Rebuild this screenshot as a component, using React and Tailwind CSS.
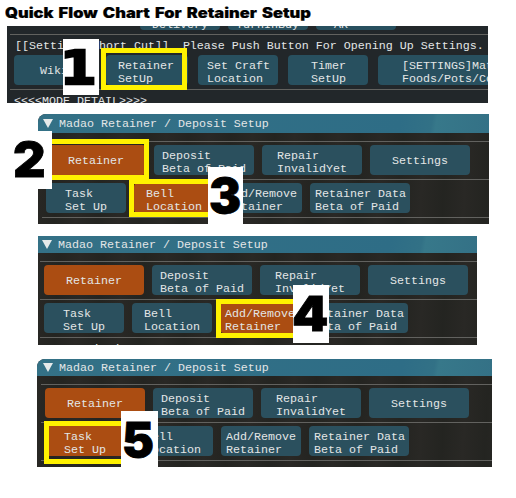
const MONO =
  "font-['Liberation_Mono',monospace] text-[11.66px] leading-[13px] text-[#e3e6e6] whitespace-pre";

function Rule() {
  return <div className="h-px shrink-0 bg-[#62625f]" />;
}

function Btn({ label, active, wide, pad, row }) {
  const tone = active
    ? "bg-[#ab4d12]"
    : row === "flat"
      ? "bg-[#28505f]"
      : "bg-[#2b505e]";
  const drop = label.includes("\n") ? "pt-[6px]" : "pt-[2px]";
  return (
    <button
      type="button"
      className={`${tone} ${wide} ${pad} ${drop} flex h-[30px] shrink-0 items-center rounded-[4px] text-left whitespace-pre`}
    >
      {label}
    </button>
  );
}

function ShortcutPanel() {
  const previous = [
    { label: "Delivery", pad: "pl-[12px]" },
    { label: "TurnInBuy", pad: "pl-[8px]" },
    { label: "AR", pad: "pl-[18px]" },
  ];
  return (
    <section
      className={`${MONO} ml-[7px] flex h-[77px] w-[481px] flex-col overflow-hidden bg-[#22272a]`}
    >
      <div className="ml-[133px] flex h-[4px] shrink-0 items-end gap-2">
        {previous.map((t) => (
          <div
            key={t.label}
            className={`${t.pad} flex h-[30px] w-20 shrink-0 items-end rounded-[4px] bg-[#28505f] leading-[9px]`}
          >
            {t.label}
          </div>
        ))}
      </div>
      <div className="mt-[4px] ml-[3px]">
        <Rule />
      </div>
      <p className="mt-[4px] ml-[8px] h-[16px] shrink-0 pt-px">
        {"[[Settings Short Cut]]  Please Push Button For Opening Up Settings."}
      </p>
      <div className="ml-[7px] flex shrink-0 gap-[10px]">
        <Btn row="flat" label="Wiki" wide="w-[82px]" pad="pl-[26px]" />
        <Btn row="flat" label={"Retainer\nSetUp"} wide="w-[82px]" pad="pl-[12px]" />
        <Btn row="flat" label={"Set Craft\nLocation"} wide="w-20" pad="pl-[9px]" />
        <Btn row="flat" label={"Timer\nSetUp"} wide="w-20" pad="pl-[23px]" />
        <Btn row="flat" label={"[SETTINGS]Materia\nFoods/Pots/Confirm"} wide="w-[180px]" pad="pl-[24px]" />
      </div>
      <div className="mt-[4px] ml-[3px]">
        <Rule />
      </div>
      <p className="mt-[5px] ml-[7px] shrink-0">{"<<<<MODE DETAIL>>>>"}</p>
    </section>
  );
}

function RetainerPanel({ box, head, left, ruleLeft, activeSub, footer }) {
  const subs = [
    { label: "Task\nSet Up", wide: "w-20", pad: "pl-[19px]" },
    { label: "Bell\nLocation", wide: "w-20", pad: "pl-[12px]" },
    { label: "Add/Remove\nRetainer", wide: "w-20", pad: "pl-[5px]" },
    { label: "Retainer Data\nBeta of Paid", wide: "w-[100px]", pad: "pl-[5px]" },
  ];
  return (
    <section
      className={`${MONO} ${box} flex flex-col overflow-hidden bg-[#292825] bg-[repeating-linear-gradient(93deg,transparent_0px,rgba(20,25,20,0.25)_22px,transparent_43px)]`}
    >
      <header
        className={`${head} flex shrink-0 items-center bg-[linear-gradient(100deg,#347186_0%,#2e6d86_80%,#327186_87%,#37788a_88%,#347186_100%)]`}
      >
        <svg viewBox="0 0 10 9" className="mr-[6px] mb-[2px] h-[9px] w-[10px]">
          <path d="M0 0h10L5 9z" fill="#e6eaea" />
        </svg>
        <span>Madao Retainer / Deposit Setup</span>
      </header>
      <div className={`mt-[8px] ${ruleLeft}`}>
        <Rule />
      </div>
      <div className={`${left} mt-[3px] flex shrink-0 gap-2`}>
        <Btn active label="Retainer" wide="w-[100px]" pad="pl-[22px]" />
        <Btn label={"Deposit\nBeta of Paid"} wide="w-[100px]" pad="pl-[8px]" />
        <Btn label={"Repair\nInvalidYet"} wide="w-[100px]" pad="pl-[15px]" />
        <Btn label="Settings" wide="w-[100px]" pad="pl-[22px]" />
      </div>
      <div className={`${ruleLeft} mt-[4px]`}>
        <Rule />
      </div>
      <div className={`${left} mt-[3px] flex shrink-0 gap-2`}>
        {subs.map((s, i) => (
          <Btn key={s.label} active={i === activeSub} {...s} />
        ))}
      </div>
      <div className={`${ruleLeft} mt-[4px]`}>
        <Rule />
      </div>
      <p className={`${footer} ${left} shrink-0`}>▼ Description</p>
    </section>
  );
}

function Frame({ at }) {
  return <div className={`${at} absolute border-[5px] border-[#fff200]`} />;
}

function Step({ n, at, glyph, face = "font-['Inter',sans-serif] [stroke-width:0.8px]" }) {
  return (
    <div className={`${at} absolute bg-white`}>
      <svg className="block h-full w-full overflow-visible">
        <text
          transform={glyph}
          className={`${face} fill-black stroke-black text-[48px] font-black`}
        >
          {n}
        </text>
      </svg>
    </div>
  );
}

export default function App() {
  return (
    <main className="relative h-[498px] w-[516px] overflow-hidden bg-white">
      <h1 className="h-[26px] pt-[3px] pl-[5px]">
        <svg className="block h-[20px] w-[320px]">
          <text
            x="0"
            y="14.5"
            textLength="306"
            lengthAdjust="spacingAndGlyphs"
            className="fill-black stroke-black font-['Inter',sans-serif] text-[14px] font-black [stroke-width:0.2px] [word-spacing:1.5px]"
          >
            Quick Flow Chart For Retainer Setup
          </text>
        </svg>
      </h1>
      <ShortcutPanel />
      <RetainerPanel
        box="mt-[11px] ml-[38px] h-[110px] w-[451px] rounded-tl-[8px]"
        head="h-[19px] pl-[5px] pt-[2px]"
        left="ml-[8px]"
        ruleLeft="ml-[4px]"
        activeSub={1}
        footer="mt-[5px]"
      />
      <RetainerPanel
        box="mt-[12px] ml-[38px] h-[109px] w-[439px]"
        head="h-[17px] pl-[4px] pt-px"
        left="ml-[6px]"
        ruleLeft="ml-[2px]"
        activeSub={2}
        footer="mt-[5px]"
      />
      <RetainerPanel
        box="mt-[14px] ml-[37px] h-[108px] w-[455px] rounded-tl-[8px]"
        head="h-[17px] pl-[6px] pt-px"
        left="ml-[8px]"
        ruleLeft="ml-[4px]"
        activeSub={0}
        footer="mt-[5px]"
      />
      <Frame at="left-[101px] top-[48px] h-[42px] w-[86px]" />
      <Frame at="left-[46px] top-[139px] h-[41px] w-[103px]" />
      <Frame at="left-[129px] top-[179px] h-[38px] w-[90px]" />
      <Frame at="left-[216px] top-[299px] h-[39px] w-[90px]" />
      <Frame at="left-[44px] top-[421px] h-[43px] w-[90px]" />
      <Step
        n="1"
        at="left-[63px] top-[39px] h-[56px] w-[36px]"
        glyph="translate(-3 45) scale(1.1 0.96)"
        face="font-['DejaVu_Sans',sans-serif] [stroke-width:2.4px]"
      />
      <Step n="2" at="left-[12px] top-[131px] h-[58px] w-[40px]" glyph="translate(1 46) scale(1.05 1)" />
      <Step n="3" at="left-[208px] top-[167px] h-[57px] w-[35px]" glyph="translate(1 46)" />
      <Step n="4" at="left-[293px] top-[285px] h-[58px] w-[36px]" glyph="translate(-1 46) scale(1.08 1)" />
      <Step n="5" at="left-[121px] top-[411px] h-[57px] w-[37px]" glyph="translate(1 46)" />
    </main>
  );
}
